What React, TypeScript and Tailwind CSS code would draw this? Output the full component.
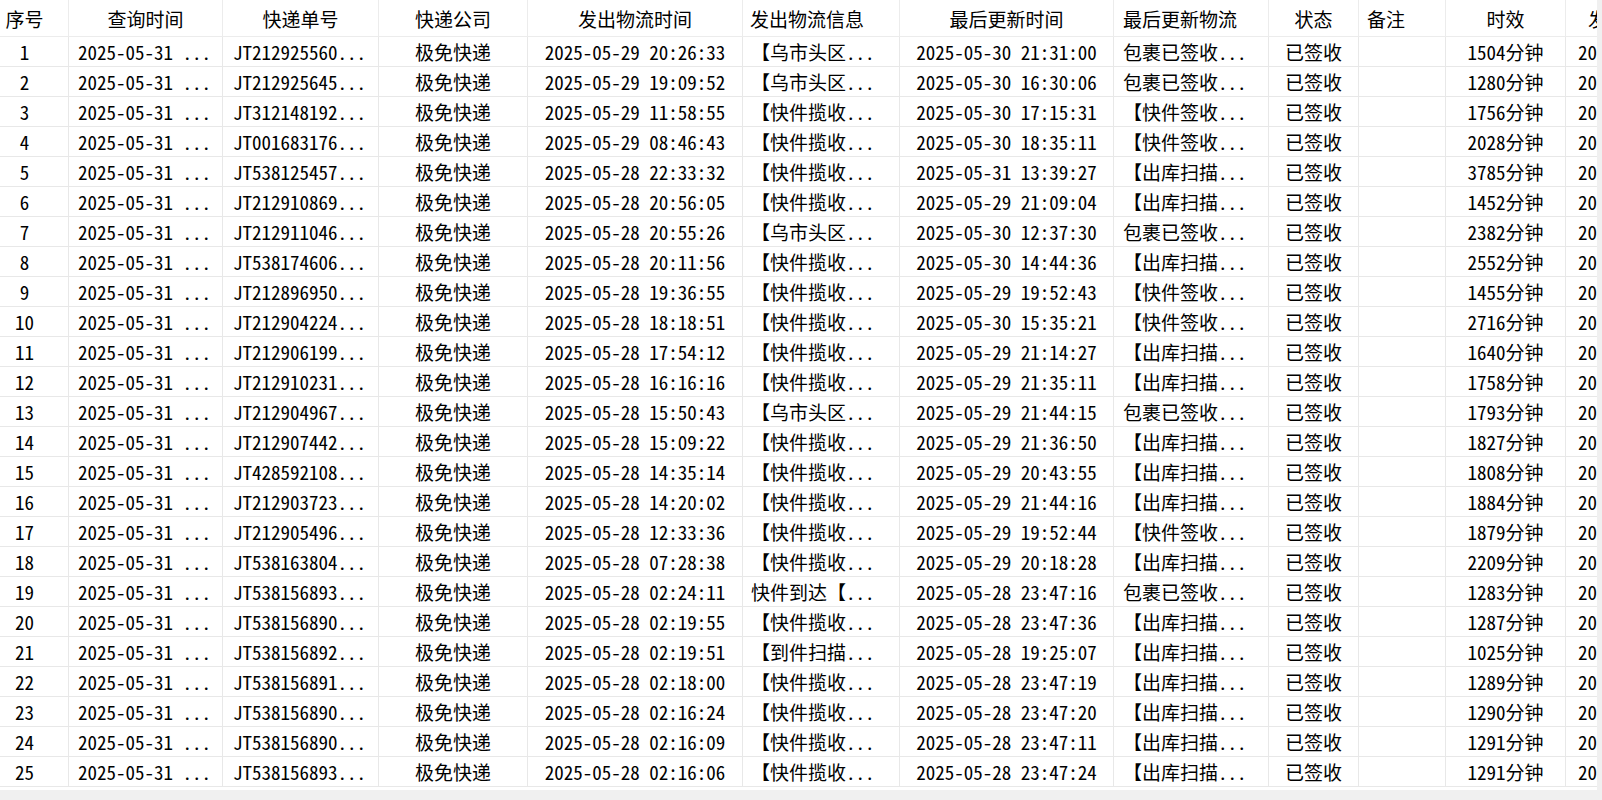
const rows: [string, string, string, string, string, string][] = [
  ["JT212925560...", "2025-05-29 20:26:33", "【乌市头区...", "2025-05-30 21:31:00", "包裹已签收...", "1504分钟"],
  ["JT212925645...", "2025-05-29 19:09:52", "【乌市头区...", "2025-05-30 16:30:06", "包裹已签收...", "1280分钟"],
  ["JT312148192...", "2025-05-29 11:58:55", "【快件揽收...", "2025-05-30 17:15:31", "【快件签收...", "1756分钟"],
  ["JT001683176...", "2025-05-29 08:46:43", "【快件揽收...", "2025-05-30 18:35:11", "【快件签收...", "2028分钟"],
  ["JT538125457...", "2025-05-28 22:33:32", "【快件揽收...", "2025-05-31 13:39:27", "【出库扫描...", "3785分钟"],
  ["JT212910869...", "2025-05-28 20:56:05", "【快件揽收...", "2025-05-29 21:09:04", "【出库扫描...", "1452分钟"],
  ["JT212911046...", "2025-05-28 20:55:26", "【乌市头区...", "2025-05-30 12:37:30", "包裹已签收...", "2382分钟"],
  ["JT538174606...", "2025-05-28 20:11:56", "【快件揽收...", "2025-05-30 14:44:36", "【出库扫描...", "2552分钟"],
  ["JT212896950...", "2025-05-28 19:36:55", "【快件揽收...", "2025-05-29 19:52:43", "【快件签收...", "1455分钟"],
  ["JT212904224...", "2025-05-28 18:18:51", "【快件揽收...", "2025-05-30 15:35:21", "【快件签收...", "2716分钟"],
  ["JT212906199...", "2025-05-28 17:54:12", "【快件揽收...", "2025-05-29 21:14:27", "【出库扫描...", "1640分钟"],
  ["JT212910231...", "2025-05-28 16:16:16", "【快件揽收...", "2025-05-29 21:35:11", "【出库扫描...", "1758分钟"],
  ["JT212904967...", "2025-05-28 15:50:43", "【乌市头区...", "2025-05-29 21:44:15", "包裹已签收...", "1793分钟"],
  ["JT212907442...", "2025-05-28 15:09:22", "【快件揽收...", "2025-05-29 21:36:50", "【出库扫描...", "1827分钟"],
  ["JT428592108...", "2025-05-28 14:35:14", "【快件揽收...", "2025-05-29 20:43:55", "【出库扫描...", "1808分钟"],
  ["JT212903723...", "2025-05-28 14:20:02", "【快件揽收...", "2025-05-29 21:44:16", "【出库扫描...", "1884分钟"],
  ["JT212905496...", "2025-05-28 12:33:36", "【快件揽收...", "2025-05-29 19:52:44", "【快件签收...", "1879分钟"],
  ["JT538163804...", "2025-05-28 07:28:38", "【快件揽收...", "2025-05-29 20:18:28", "【出库扫描...", "2209分钟"],
  ["JT538156893...", "2025-05-28 02:24:11", "快件到达【...", "2025-05-28 23:47:16", "包裹已签收...", "1283分钟"],
  ["JT538156890...", "2025-05-28 02:19:55", "【快件揽收...", "2025-05-28 23:47:36", "【出库扫描...", "1287分钟"],
  ["JT538156892...", "2025-05-28 02:19:51", "【到件扫描...", "2025-05-28 19:25:07", "【出库扫描...", "1025分钟"],
  ["JT538156891...", "2025-05-28 02:18:00", "【快件揽收...", "2025-05-28 23:47:19", "【出库扫描...", "1289分钟"],
  ["JT538156890...", "2025-05-28 02:16:24", "【快件揽收...", "2025-05-28 23:47:20", "【出库扫描...", "1290分钟"],
  ["JT538156890...", "2025-05-28 02:16:09", "【快件揽收...", "2025-05-28 23:47:11", "【出库扫描...", "1291分钟"],
  ["JT538156893...", "2025-05-28 02:16:06", "【快件揽收...", "2025-05-28 23:47:24", "【出库扫描...", "1291分钟"],
];

const cols = "grid grid-cols-[69px_154px_156px_149px_215px_157px_214px_155px_90px_87px_120px_80px]";
const cell = "h-[30px] flex items-center whitespace-nowrap overflow-hidden border-r border-b border-[#e8e8e8]";
const head = "h-[37px] flex items-center whitespace-nowrap overflow-hidden border-r border-b border-[#ececec]";

function Header() {
  return (
    <div className={cols}>
      <div className={`${head} justify-center pr-[19px]`}>序号</div>
      <div className={`${head} justify-center`}>查询时间</div>
      <div className={`${head} justify-center`}>快递单号</div>
      <div className={`${head} justify-center`}>快递公司</div>
      <div className={`${head} justify-center`}>发出物流时间</div>
      <div className={`${head} pl-[7px]`}>发出物流信息</div>
      <div className={`${head} justify-center`}>最后更新时间</div>
      <div className={`${head} pl-[9px]`}>最后更新物流</div>
      <div className={`${head} justify-center`}>状态</div>
      <div className={`${head} pl-[8px]`}>备注</div>
      <div className={`${head} justify-center`}>时效</div>
      <div className={`${head} pl-[22px]`}>发出时间</div>
    </div>
  );
}

export default function App() {
  return (
    <div className="w-[1602px] h-[800px] bg-[#f0f0f0] overflow-hidden text-[19px] leading-none text-black font-['Noto_Sans_Mono_CJK_SC','Noto_Sans_CJK_SC',monospace]">
      <div className="w-[1597px] h-[790px] bg-white overflow-hidden">
        <Header />
        {rows.map((r, i) => (
          <div key={i} className={cols}>
            <div className={`${cell} justify-center pr-[19px]`}>{i + 1}</div>
            <div className={`${cell} pl-[9px]`}>2025-05-31 ...</div>
            <div className={`${cell} pl-[10px]`}>{r[0]}</div>
            <div className={`${cell} justify-center`}>极免快递</div>
            <div className={`${cell} justify-center`}>{r[1]}</div>
            <div className={`${cell} pl-[8px]`}>{r[2]}</div>
            <div className={`${cell} justify-center`}>{r[3]}</div>
            <div className={`${cell} pl-[9px]`}>{r[4]}</div>
            <div className={`${cell} justify-center`}>已签收</div>
            <div className={cell}></div>
            <div className={`${cell} justify-center`}>{r[5]}</div>
            <div className={`${cell} pl-[12px]`}>{r[3]}</div>
          </div>
        ))}
      </div>
    </div>
  );
}
